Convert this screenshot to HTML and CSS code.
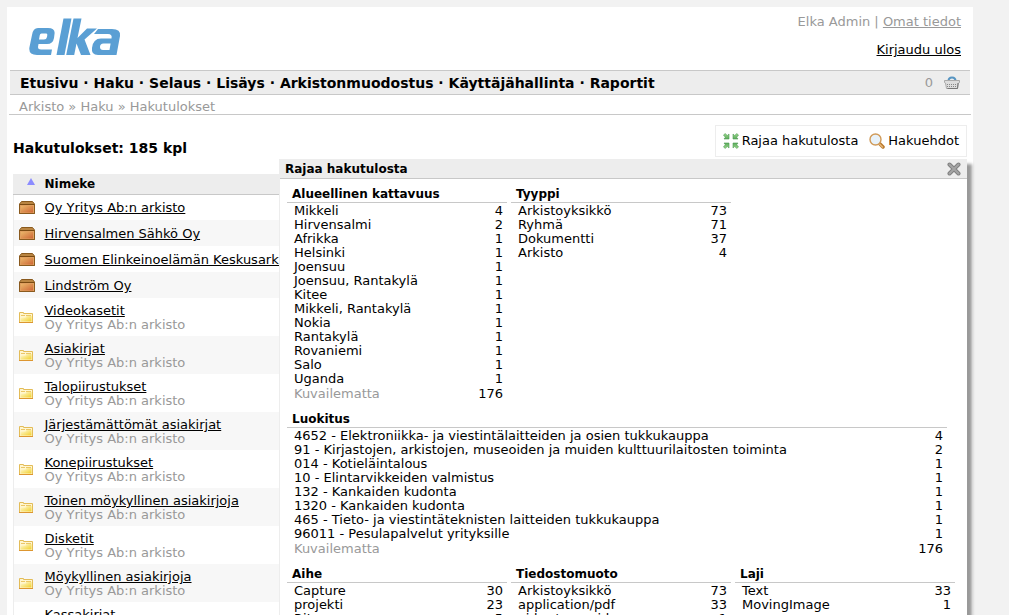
FILE: index.html
```
<!DOCTYPE html>
<html lang="fi">
<head>
<meta charset="utf-8">
<title>Hakutulokset</title>
<link rel="stylesheet" href="styles.css">
</head>
<body>
<svg class="defs" aria-hidden="true">
  <defs>
    <linearGradient id="boxfill" x1="0" y1="0" x2="1" y2="1"><stop offset="0" stop-color="#ecba6c"/><stop offset="1" stop-color="#cc6234"/></linearGradient>
    <linearGradient id="folderfill" x1="0" y1="0" x2="1" y2="1"><stop offset="0" stop-color="#fffbe0"/><stop offset="1" stop-color="#f2d028"/></linearGradient>
    <linearGradient id="greenfill" x1="0" y1="0" x2="0" y2="1"><stop offset="0" stop-color="#9cd88c"/><stop offset="1" stop-color="#5cab5c"/></linearGradient>
    <symbol id="box" viewBox="0 0 16 13">
      <path d="M2.500.5h11l2 2.500v9.500H.5V3z" fill="#b98542" stroke="#8a5a1e"/>
      <path d="M1 3.500h14" stroke="#7a4a12"/>
      <rect x="1.500" y="4.500" width="13" height="7.500" fill="url(#boxfill)" stroke="#e0a060"/>
      <path d="M.5 4v8.500h15V4" fill="none" stroke="#8a5a1e"/>
    </symbol>
    <symbol id="folder" viewBox="0 0 14 11">
      <path d="M.5 10.500V.5h4v1h9v9z" fill="#fff6d0" stroke="#e3bc58"/>
      <path d="M1.500 9.500V5.500h5l1-1.500h5v5.500z" fill="url(#folderfill)"/>
      <path d="M2 3.500h4M7 3.500h5" fill="none" stroke="#ecc766"/>
      <path d="M0 10.500h14" stroke="#dd9630"/>
    </symbol>
  </defs>
</svg>
<div class="page">
  <header class="header">
    <svg class="logo" viewBox="0 0 92 38" role="img" aria-label="elka">
      <g fill="#5a9fd4">
        <path fill-rule="evenodd" d="M9 10H19Q26.500 10 25.500 16L25 20Q24 26 18 26H9.500L9 29Q9 31.500 12 31.500H23L22 37H8Q-1 37 .5 29L3 17Q4 10 9 10ZM12.500 15.500Q11 15.500 10.700 17.500L10 21.500H15Q17.500 21.500 18 19L18.300 17Q18.500 15.500 17 15.500Z"/>
        <path d="M34.500.5H42.500L35.500 37H27.500Z"/>
        <path d="M44.500.5H52.500L48.500 20L58 10.500H68L55.500 21.500L61.500 37H52L47.500 25.500L45.200 37H37.200Z"/>
        <path fill-rule="evenodd" d="M69 11H83Q92 11 91 18L87.500 37H69Q62 37 63 30Q64 20.500 72 20.500H82.500Q83.500 16 79 16H65ZM74.500 25.500Q71 25.500 71 29Q71 32 74 32H80.500L81.600 25.500Z"/>
      </g>
    </svg>
    <div class="user">
      <div class="who">Elka Admin | <a href="#">Omat tiedot</a></div>
      <a class="logout" href="#">Kirjaudu ulos</a>
    </div>
  </header>
  <nav class="nav">
    <div class="menu"><a href="#">Etusivu</a> · <a href="#">Haku</a> · <a href="#">Selaus</a> · <a href="#">Lisäys</a> · <a href="#">Arkistonmuodostus</a> · <a href="#">Käyttäjähallinta</a> · <a href="#">Raportit</a></div>
    <a class="basket" href="#">0
      <svg width="16" height="13" viewBox="0 0 16 13" aria-hidden="true">
        <path d="M4.500 5Q4.500 1.500 8 1.500T11.500 5" fill="none" stroke="#5795c2" stroke-width="2"/>
        <path d="M.5 4.500h15v2l-1 .5-1 5.500h-11L1.500 7l-1-.5z" fill="#ddd" stroke="#aaa"/>
        <path d="M3 8.500h10M3 10.500h10" stroke="#888" stroke-dasharray="1 1"/>
        <path d="M14 7l-.5 5.500h-10" fill="none" stroke="#777"/>
      </svg>
    </a>
  </nav>
  <div class="crumbs"><a href="#">Arkisto</a> » <a href="#">Haku</a> » <a href="#">Hakutulokset</a></div>
  <main class="main">
    <div class="titlebar">
      <h1>Hakutulokset: 185 kpl</h1>
      <div class="tools">
        <button type="button">
          <svg width="16" height="16" viewBox="0 0 16 16" aria-hidden="true" fill="url(#greenfill)" stroke="#4f9c55" stroke-width=".6">
            <path id="arr" d="M.5 2L2.200.6 4.300 2.500 6 1V6H1L2.300 4.300z"/>
            <use href="#arr" transform="translate(16 0) scale(-1 1)"/>
            <use href="#arr" transform="translate(0 16) scale(1 -1)"/>
            <use href="#arr" transform="translate(16 16) scale(-1 -1)"/>
          </svg>Rajaa hakutulosta</button>
        <button type="button">
          <svg width="16" height="16" viewBox="0 0 16 16" aria-hidden="true">
            <path d="M10.500 10.500l3.500 3.500" stroke="#b8782c" stroke-width="3.500" stroke-linecap="round"/>
            <path d="M10.500 11l3 3" stroke="#e9b878" stroke-width="1.500" stroke-linecap="round"/>
            <circle cx="6.500" cy="6.500" r="5.500" fill="#e8f2fa" stroke="#d09a58" stroke-width="1.400"/>
          </svg>Hakuehdot</button>
      </div>
    </div>
    <table class="results">
      <thead><tr><th class="ic"><svg width="8" height="7" viewBox="0 0 8 7" aria-hidden="true"><path d="M4 0l4 7H0z" fill="#8c8cff"/></svg></th><th>Nimeke</th></tr></thead>
      <tbody>
        <tr><td class="ic"><svg width="16" height="13"><use href="#box"/></svg></td><td><a href="#">Oy Yritys Ab:n arkisto</a></td></tr>
        <tr><td class="ic"><svg width="16" height="13"><use href="#box"/></svg></td><td><a href="#">Hirvensalmen Sähkö Oy</a></td></tr>
        <tr><td class="ic"><svg width="16" height="13"><use href="#box"/></svg></td><td><a href="#">Suomen Elinkeinoelämän Keskusarkisto</a></td></tr>
        <tr><td class="ic"><svg width="16" height="13"><use href="#box"/></svg></td><td><a href="#">Lindström Oy</a></td></tr>
        <tr><td class="ic"><svg width="14" height="11"><use href="#folder"/></svg></td><td><a href="#">Videokasetit</a><div class="sub">Oy Yritys Ab:n arkisto</div></td></tr>
        <tr><td class="ic"><svg width="14" height="11"><use href="#folder"/></svg></td><td><a href="#">Asiakirjat</a><div class="sub">Oy Yritys Ab:n arkisto</div></td></tr>
        <tr><td class="ic"><svg width="14" height="11"><use href="#folder"/></svg></td><td><a href="#">Talopiirustukset</a><div class="sub">Oy Yritys Ab:n arkisto</div></td></tr>
        <tr><td class="ic"><svg width="14" height="11"><use href="#folder"/></svg></td><td><a href="#">Järjestämättömät asiakirjat</a><div class="sub">Oy Yritys Ab:n arkisto</div></td></tr>
        <tr><td class="ic"><svg width="14" height="11"><use href="#folder"/></svg></td><td><a href="#">Konepiirustukset</a><div class="sub">Oy Yritys Ab:n arkisto</div></td></tr>
        <tr><td class="ic"><svg width="14" height="11"><use href="#folder"/></svg></td><td><a href="#">Toinen möykyllinen asiakirjoja</a><div class="sub">Oy Yritys Ab:n arkisto</div></td></tr>
        <tr><td class="ic"><svg width="14" height="11"><use href="#folder"/></svg></td><td><a href="#">Disketit</a><div class="sub">Oy Yritys Ab:n arkisto</div></td></tr>
        <tr><td class="ic"><svg width="14" height="11"><use href="#folder"/></svg></td><td><a href="#">Möykyllinen asiakirjoja</a><div class="sub">Oy Yritys Ab:n arkisto</div></td></tr>
        <tr><td class="ic"><svg width="14" height="11"><use href="#folder"/></svg></td><td><a href="#">Kassakirjat</a><div class="sub">Oy Yritys Ab:n arkisto</div></td></tr>
      </tbody>
    </table>
    <section class="panel">
      <div class="panel-head"><h2>Rajaa hakutulosta</h2>
        <button type="button" aria-label="Sulje"><svg width="14" height="14" viewBox="0 0 14 14" aria-hidden="true"><path d="M2.500 2.500l9 9M11.500 2.500l-9 9" stroke="#808080" stroke-width="4" stroke-linecap="round"/><path d="M2.500 2.500l9 9M11.500 2.500l-9 9" stroke="#a4a4a4" stroke-width="2" stroke-linecap="round"/></svg></button>
      </div>
      <div class="facets">
        <div class="facet"><h3>Alueellinen kattavuus</h3>
          <ul>
            <li><span>Mikkeli</span><span>4</span></li>
            <li><span>Hirvensalmi</span><span>2</span></li>
            <li><span>Afrikka</span><span>1</span></li>
            <li><span>Helsinki</span><span>1</span></li>
            <li><span>Joensuu</span><span>1</span></li>
            <li><span>Joensuu, Rantakylä</span><span>1</span></li>
            <li><span>Kitee</span><span>1</span></li>
            <li><span>Mikkeli, Rantakylä</span><span>1</span></li>
            <li><span>Nokia</span><span>1</span></li>
            <li><span>Rantakylä</span><span>1</span></li>
            <li><span>Rovaniemi</span><span>1</span></li>
            <li><span>Salo</span><span>1</span></li>
            <li><span>Uganda</span><span>1</span></li>
            <li class="none"><span>Kuvailematta</span><span>176</span></li>
          </ul>
        </div>
        <div class="facet"><h3>Tyyppi</h3>
          <ul>
            <li><span>Arkistoyksikkö</span><span>73</span></li>
            <li><span>Ryhmä</span><span>71</span></li>
            <li><span>Dokumentti</span><span>37</span></li>
            <li><span>Arkisto</span><span>4</span></li>
          </ul>
        </div>
        <div class="facet wide"><h3>Luokitus</h3>
          <ul>
            <li><span>4652 - Elektroniikka- ja viestintälaitteiden ja osien tukkukauppa</span><span>4</span></li>
            <li><span>91 - Kirjastojen, arkistojen, museoiden ja muiden kulttuurilaitosten toiminta</span><span>2</span></li>
            <li><span>014 - Kotieläintalous</span><span>1</span></li>
            <li><span>10 - Elintarvikkeiden valmistus</span><span>1</span></li>
            <li><span>132 - Kankaiden kudonta</span><span>1</span></li>
            <li><span>1320 - Kankaiden kudonta</span><span>1</span></li>
            <li><span>465 - Tieto- ja viestintäteknisten laitteiden tukkukauppa</span><span>1</span></li>
            <li><span>96011 - Pesulapalvelut yrityksille</span><span>1</span></li>
            <li class="none"><span>Kuvailematta</span><span>176</span></li>
          </ul>
        </div>
        <div class="facet"><h3>Aihe</h3>
          <ul>
            <li><span>Capture</span><span>30</span></li>
            <li><span>projekti</span><span>23</span></li>
            <li><span>Ritarm</span><span>5</span></li>
          </ul>
        </div>
        <div class="facet"><h3>Tiedostomuoto</h3>
          <ul>
            <li><span>Arkistoyksikkö</span><span>73</span></li>
            <li><span>application/pdf</span><span>33</span></li>
            <li><span>video/x-msvideo</span><span>1</span></li>
          </ul>
        </div>
        <div class="facet"><h3>Laji</h3>
          <ul>
            <li><span>Text</span><span>33</span></li>
            <li><span>MovingImage</span><span>1</span></li>
          </ul>
        </div>
      </div>
    </section>
  </main>
</div>
</body>
</html>
```
FILE: styles.css
```
* { box-sizing: border-box; }
body {
  margin: 0;
  height: 100vh;
  overflow: hidden;
  background: #f2f2f2;
  color: #000;
  font: 13px/14px Verdana, "DejaVu Sans", sans-serif;
}
a { color: inherit; }
h1, h2, h3, ul { margin: 0; padding: 0; }
button { border: 0; padding: 0; background: none; font: inherit; color: inherit; }
svg { display: block; flex: none; }
.defs { position: absolute; width: 0; height: 0; }
.page { margin: 7px 36px 0 7px; background: #fff; min-height: 100vh; }
.header { display: flex; justify-content: space-between; padding: 0 12px 0 22px; height: 63px; }
.logo { width: 92px; height: 38px; margin-top: 11px; }
.user { padding-top: 8px; text-align: right; display: flex; flex-direction: column; gap: 14px; }
.who { color: #999; }
.nav {
  display: flex; justify-content: space-between; align-items: center;
  margin: 0 3px; padding: 0 10px; height: 25px;
  background: #ededed; border-top: 1px solid #c8c8c8; border-bottom: 1px solid #c8c8c8;
}
.menu { font-size: 14px; font-weight: bold; white-space: nowrap; }
.nav a { text-decoration: none; }
.basket { display: flex; align-items: center; gap: 11px; color: #999; }
.crumbs { margin: 0 2px; padding: 5px 10px 0; height: 20px; color: #999; border-bottom: 1px solid #c8c8c8; }
.crumbs a { text-decoration: none; }
.main { position: relative; padding: 10px 6px 0; }
.titlebar { display: flex; justify-content: space-between; height: 49px; }
h1 { font-size: 14px; line-height: 18px; padding-top: 14px; }
.tools { display: flex; gap: 11px; height: 32px; padding: 0 7px; border: 1px solid #ededed; }
.tools button { display: flex; align-items: center; gap: 3px; }
.results { width: 100%; border-collapse: collapse; border-left: 1px solid #ededed; }
.results th { height: 20px; padding: 1px 0 0; font-size: 12px; text-align: left; background: #ededed; border-bottom: 1px solid #c8c8c8; }
.results .ic { width: 31px; padding: 0; }
.results td.ic svg { margin-left: 5px; }
.results th.ic svg { margin: 0 0 4px 13px; }
.results td { padding: 6px 0 4px; height: 26px; }
.results tbody tr:nth-child(even) { background: #f7f7f7; }
.sub { color: #999; }
.panel {
  position: absolute; top: 44px; left: 272px; right: 6px; min-height: 100vh;
  background: #fff; border-left: 1px solid #ededed;
  box-shadow: 5px 5px 3px #999;
}
.panel-head {
  display: flex; justify-content: space-between; align-items: center;
  height: 20px; padding: 0 6px 0 5px; background: #ededed; border-bottom: 1px solid #c8c8c8;
}
h2, h3 { font-size: 12px; line-height: 16px; }
.facets { display: grid; grid-template-columns: repeat(3, 1fr); gap: 10px 4px; padding: 7px 12px 0 7px; }
h3 { padding: 0 5px; border-bottom: 1px solid #c8c8c8; }
.wide { grid-column: 1 / -1; margin-right: 8px; }
.facet ul { list-style: none; padding: 1px 4px 0 7px; }
.facet li { display: flex; justify-content: space-between; }
.none { padding-top: 1px; }
.none span:first-child { color: #999; }
```
